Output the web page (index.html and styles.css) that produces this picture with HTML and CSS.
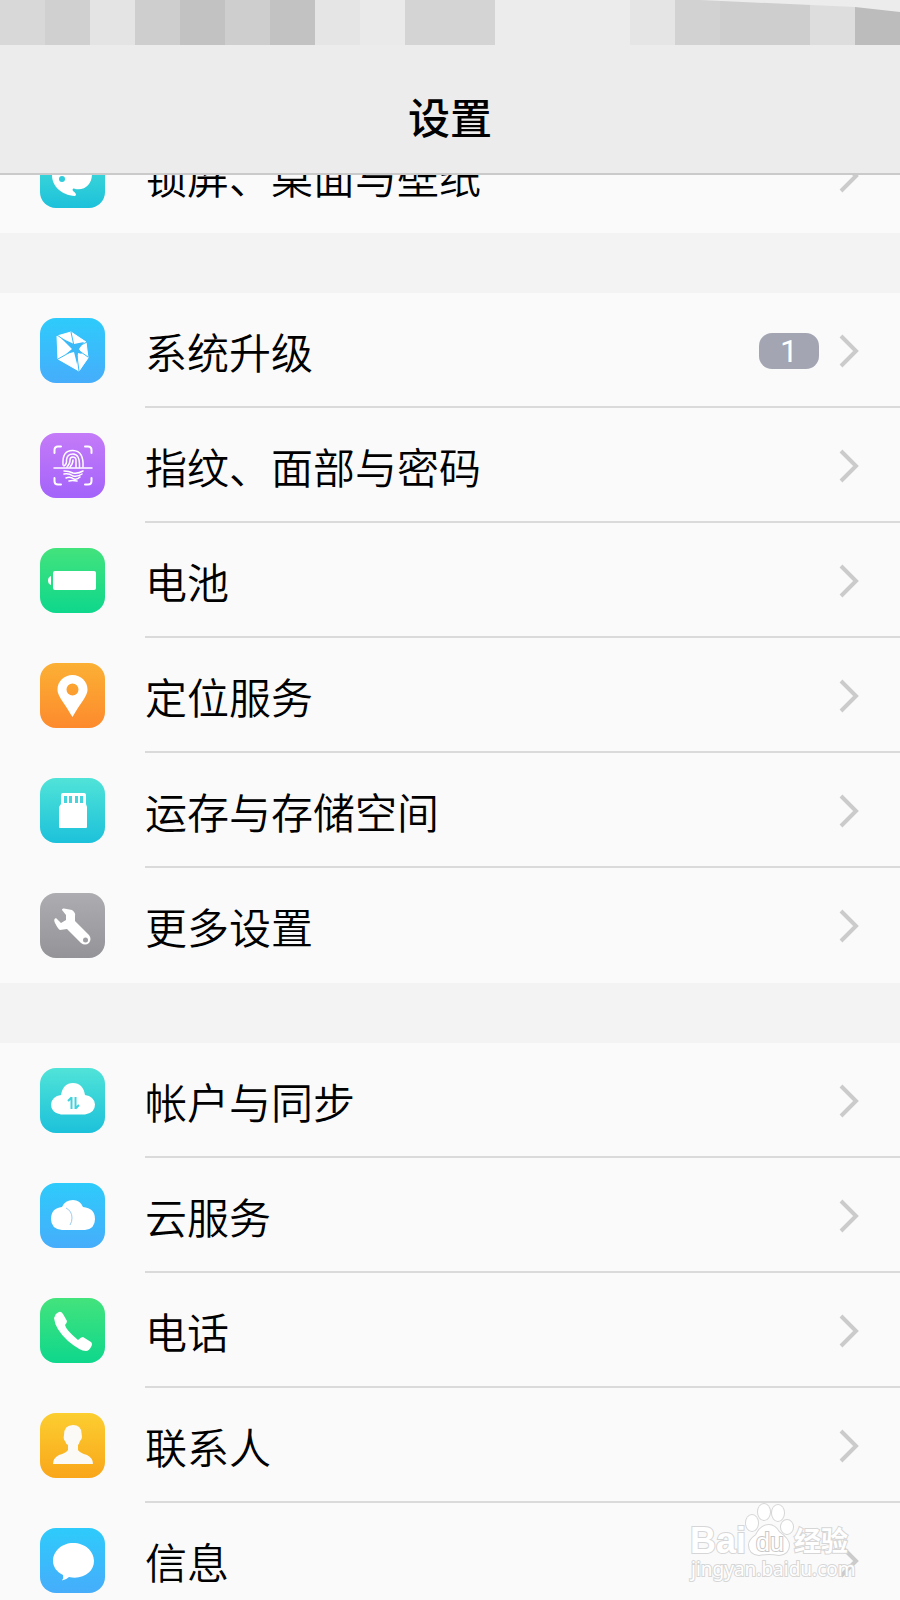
FILE: index.html
```html
<!DOCTYPE html>
<html lang="zh-CN">
<head>
    <meta charset="UTF-8">
    <meta name="viewport" content="width=device-width, initial-scale=1.0">
    <title>设置</title>
    <link rel="stylesheet" href="styles.css">
</head>
<body>
    <div class="screen">
        <header class="header">
            <svg class="status-bar" viewBox="0 0 900 45" preserveAspectRatio="none" shape-rendering="crispEdges" aria-hidden="true">
                <rect x="0" width="45" height="45" fill="#d8d8d8"/>
                <rect x="45" width="45" height="45" fill="#d0d0d0"/>
                <rect x="90" width="45" height="45" fill="#e4e4e4"/>
                <rect x="135" width="45" height="45" fill="#cecece"/>
                <rect x="180" width="45" height="45" fill="#c2c2c2"/>
                <rect x="225" width="45" height="45" fill="#cecece"/>
                <rect x="270" width="45" height="45" fill="#c2c2c2"/>
                <rect x="315" width="45" height="45" fill="#e5e5e5"/>
                <rect x="360" width="45" height="45" fill="#eaeaea"/>
                <rect x="405" width="90" height="45" fill="#d4d4d4"/>
                <rect x="630" width="45" height="45" fill="#e5e5e5"/>
                <rect x="675" width="45" height="45" fill="#d2d2d2"/>
                <rect x="720" width="90" height="45" fill="#cecece"/>
                <rect x="810" width="45" height="45" fill="#dddddd"/>
                <rect x="855" width="45" height="45" fill="#bcbcbc"/>
                <path d="M700 0L855 7L900 12V0Z" fill="#ececec" shape-rendering="auto"/>
            </svg>
            <h1 class="title">设置</h1>
        </header>

        <main class="content">
            <ul class="group">
                <li><a class="row" href="#wallpaper">
                    <svg class="icon teal" viewBox="0 0 65 65" aria-hidden="true">
                        <path d="M32 11C20 11 12 20 12 32C12 43 21 52 35 53C37 52 36 50 33 48C32 46 33 45 35 46C45 48 52 41 52 31C52 20 43 11 32 11Z" fill="#fff"/>
                        <circle cx="22" cy="36" r="3" fill="#2fcddb"/>
                        <circle cx="25" cy="23" r="3" fill="#2fcddb"/>
                    </svg>
                    <span class="label">锁屏、桌面与壁纸</span>
                    <svg class="chevron" viewBox="0 0 20 34" aria-hidden="true"><path d="M2 2L17 17L2 32"/></svg>
                </a></li>
            </ul>

            <ul class="group">
                <li><a class="row" href="#update">
                    <svg class="icon blue" viewBox="0 0 65 65" aria-hidden="true">
                        <path d="M17 18L31 14L46 24L48 40L39 53L18 41Z" fill="#fff" stroke="#fff" stroke-linejoin="round"/>
                        <path d="M31 14L34 28M48 39L38 32M18 41L34 32M47 24L41 27M39 53L37 38M17 17L27 24" stroke="#3bbaf9" fill="none"/>
                        <path d="M21 20L34 26L44 24L39 31L42 36L38 35L37 46L34 34L26 36L32 31Z" fill="#3bbaf9"/>
                    </svg>
                    <span class="label">系统升级</span>
                    <span class="badge">1</span>
                    <svg class="chevron" viewBox="0 0 20 34" aria-hidden="true"><path d="M2 2L17 17L2 32"/></svg>
                </a></li>
                <li><a class="row" href="#security">
                    <svg class="icon purple" viewBox="0 0 65 65" aria-hidden="true">
                        <g fill="none" stroke="#fff" stroke-linecap="round">
                            <path d="M14.500 20V17Q14.500 13.500 18 13.500H21M45 13.500H48Q51.500 13.500 51.500 17V20M51.500 45V48Q51.500 51.500 48 51.500H45M21 51.500H18Q14.500 51.500 14.500 48V45" stroke-width="2"/>
                            <path d="M14 35H52" stroke-width="1.500"/>
                            <path d="M23 32Q22 17 33 17.500Q44 18 43 34M24 33Q27 31 26.500 27Q27 21 33 21Q40 21 39.500 34M27 34Q30 31 30 27Q30 24 33 24Q36.500 24 36 29V34M30 34Q33 31 33 27" stroke-width="1.500"/>
                            <path d="M24 38Q29 38 33 40Q38 41 43 38M24 41Q29 40 33 43Q38 44 42 41M26 45Q30 43 34 46Q37 47 40 44M29 48Q32 47 37 48" stroke-width="1.500"/>
                        </g>
                    </svg>
                    <span class="label">指纹、面部与密码</span>
                    <svg class="chevron" viewBox="0 0 20 34" aria-hidden="true"><path d="M2 2L17 17L2 32"/></svg>
                </a></li>
                <li><a class="row" href="#battery">
                    <svg class="icon green" viewBox="0 0 65 65" aria-hidden="true">
                        <rect x="13" y="23" width="43" height="19" rx="2" fill="#fff"/>
                        <path d="M11 28V37Q8 36 8 32.500Q8 29 11 28Z" fill="#fff"/>
                    </svg>
                    <span class="label">电池</span>
                    <svg class="chevron" viewBox="0 0 20 34" aria-hidden="true"><path d="M2 2L17 17L2 32"/></svg>
                </a></li>
                <li><a class="row" href="#location">
                    <svg class="icon orange" viewBox="0 0 65 65" aria-hidden="true">
                        <path d="M32.500 12C24 12 17.500 18.500 17.500 26.500C17.500 33 23 38 32.500 54C42 38 47.500 33 47.500 26.500C47.500 18.500 41 12 32.500 12ZM32.500 20.500A6 6 0 1 1 32.500 32.500A6 6 0 1 1 32.500 20.500Z" fill="#fff" fill-rule="evenodd"/>
                    </svg>
                    <span class="label">定位服务</span>
                    <svg class="chevron" viewBox="0 0 20 34" aria-hidden="true"><path d="M2 2L17 17L2 32"/></svg>
                </a></li>
                <li><a class="row" href="#storage">
                    <svg class="icon teal" viewBox="0 0 65 65" aria-hidden="true">
                        <path d="M21 26V17Q21 15 23 15H44Q46 15 46 17V26L47 29V49Q47 50 46 50H20Q19 50 19 49V29Z" fill="#fff"/>
                        <path d="M24 18h3v7h-3zM29 18h3v7h-3zM35 18h3v7h-3zM40 18h3v7h-3z" fill="#45d5de"/>
                    </svg>
                    <span class="label">运存与存储空间</span>
                    <svg class="chevron" viewBox="0 0 20 34" aria-hidden="true"><path d="M2 2L17 17L2 32"/></svg>
                </a></li>
                <li><a class="row" href="#more">
                    <svg class="icon gray" viewBox="0 0 65 65" aria-hidden="true">
                        <path d="M22 17Q22 15 24 15.500L32 17Q36 20 35 23V28L49 42Q52 46 49 50Q45 53 41 50L27 36L20 37Q18 36 15 30Q13 26 16 25L21 30L26 27V22Z" fill="#fff"/>
                        <circle cx="45.500" cy="47" r="2.500" fill="#a0a0a4"/>
                    </svg>
                    <span class="label">更多设置</span>
                    <svg class="chevron" viewBox="0 0 20 34" aria-hidden="true"><path d="M2 2L17 17L2 32"/></svg>
                </a></li>
            </ul>

            <ul class="group">
                <li><a class="row" href="#account">
                    <svg class="icon teal" viewBox="0 0 65 65" aria-hidden="true">
                        <path d="M21 46.500Q11 45 11 36.500Q12 28 21 27Q23 15 33 15Q43 15 45 27Q54 28 55 36.500Q55 45 45 46.500Z" fill="#fff"/>
                        <path d="M31.500 41V29M31.500 29.500L28 33M35.500 29V41M35.500 40.500L39 37" fill="none" stroke="#3dd3dc" stroke-width="2"/>
                    </svg>
                    <span class="label">帐户与同步</span>
                    <svg class="chevron" viewBox="0 0 20 34" aria-hidden="true"><path d="M2 2L17 17L2 32"/></svg>
                </a></li>
                <li><a class="row" href="#cloud">
                    <svg class="icon blue" viewBox="0 0 65 65" aria-hidden="true">
                        <path d="M22 47Q11 46 11 36Q11 25 22 24Q25 17 33 17Q40 17 43 24Q55 25 55 36Q55 46 45 47Z" fill="#fff"/>
                        <path d="M26 25Q32 28 32 35Q32 39 30 42" fill="none" stroke="#9bcdf2"/>
                    </svg>
                    <span class="label">云服务</span>
                    <svg class="chevron" viewBox="0 0 20 34" aria-hidden="true"><path d="M2 2L17 17L2 32"/></svg>
                </a></li>
                <li><a class="row" href="#phone">
                    <svg class="icon green" viewBox="0 0 65 65" aria-hidden="true">
                        <path d="M15 18Q15 16 19 14Q21 13 23 16L27 23Q27 25 25 27Q26 32 38 42Q41 39 43 39L51 44Q53 46 51 49Q49 53 46 53Q40 53 28 43Q15 31 14 20Z" fill="#fff"/>
                    </svg>
                    <span class="label">电话</span>
                    <svg class="chevron" viewBox="0 0 20 34" aria-hidden="true"><path d="M2 2L17 17L2 32"/></svg>
                </a></li>
                <li><a class="row" href="#contacts">
                    <svg class="icon yellow" viewBox="0 0 65 65" aria-hidden="true">
                        <path d="M33 12Q41 12 41.500 20L42 24Q42 26 40 28Q39 31 38 32V37Q40 40 47 42Q53 45 53 51H13Q13 45 19 42Q26 40 28 37V32Q26 31 25 28Q23 26 24 22Q24 12 33 12Z" fill="#fbfaf7"/>
                    </svg>
                    <span class="label">联系人</span>
                    <svg class="chevron" viewBox="0 0 20 34" aria-hidden="true"><path d="M2 2L17 17L2 32"/></svg>
                </a></li>
                <li><a class="row" href="#messages">
                    <svg class="icon blue" viewBox="0 0 65 65" aria-hidden="true">
                        <path d="M33 15C22 15 13 23 13 33C13 39 17 44 23 47Q24 50 22 52.500Q26 52 29 49C43 52 54 44 54 33C54 23 45 15 33 15Z" fill="#fff"/>
                    </svg>
                    <span class="label">信息</span>
                    <svg class="chevron" viewBox="0 0 20 34" aria-hidden="true"><path d="M2 2L17 17L2 32"/></svg>
                </a></li>
            </ul>
        </main>

        <svg class="watermark" viewBox="0 0 170 84" role="img" aria-label="Baidu 经验">
            <text class="wm-brand" x="2" y="51">Bai</text>
            <g class="wm-paw">
                <ellipse cx="64" cy="21" rx="6" ry="8"/>
                <ellipse cx="76" cy="10" rx="6" ry="8"/>
                <ellipse cx="90" cy="11" rx="6" ry="8"/>
                <ellipse cx="99" cy="25" rx="6" ry="7"/>
                <path d="M81 23Q87 23 91 30Q101 37 101 43Q101 52 91 53Q81 51 71 53Q61 52 61 43Q61 38 68 33Q73 23 81 23Z"/>
            </g>
            <text class="wm-du" x="68" y="49">du</text>
            <text class="wm-cn" x="106" y="49">经验</text>
            <text class="wm-url" x="3" y="74">jingyan.baidu.com</text>
        </svg>
    </div>
</body>
</html>
```
FILE: styles.css
```css
* {
    box-sizing: border-box;
}
body {
    margin: 0;
    background: #f3f3f3;
    color: #000;
    font-family: "Noto Sans CJK SC", "Noto Sans", sans-serif;
}
.screen {
    position: relative;
    height: 100vh;
    overflow: hidden;
}

/* header stays above the scrolled list */
.header {
    position: absolute;
    top: 0;
    left: 0;
    right: 0;
    z-index: 1;
    background: #ececec;
    border-bottom: 2px solid #cacaca;
}
.status-bar {
    display: block;
    width: 100%;
    height: 45px;
}
.title {
    margin: 0;
    padding: 47px 0 33px;
    font-size: 42px;
    line-height: 48px;
    font-weight: 500;
    text-align: center;
}

.content {
    display: flex;
    flex-direction: column;
    gap: 60px;
    padding-top: 118px;
}
.group {
    margin: 0;
    padding: 0;
    list-style: none;
    background: #fafafa;
}
.row {
    display: flex;
    align-items: center;
    height: 115px;
    padding: 0 41px 0 40px;
    color: inherit;
    text-decoration: none;
}
.group li:not(:last-child) .row {
    background: linear-gradient(#dadada, #dadada) 145px 100% / 100% 2px no-repeat;
}
.label {
    flex: 1;
    margin-left: 40px;
    font-size: 42px;
    font-weight: 350;
    line-height: 60px;
}
.badge {
    width: 60px;
    margin-right: 20px;
    border-radius: 13px;
    background: #a3a5b2;
    color: #fff;
    font-family: Roboto, sans-serif;
    font-size: 32px;
    font-weight: 400;
    line-height: 36px;
    text-align: center;
}
.chevron {
    width: 20px;
    height: 34px;
    fill: none;
    stroke: #cbcbcb;
    stroke-width: 4;
}

.icon {
    width: 65px;
    height: 65px;
    border-radius: 16px;
}
.teal {
    background: linear-gradient(#50e3d8, #1cc1da);
}
.blue {
    background: linear-gradient(#2ecbfb, #46adfb);
}
.purple {
    background: linear-gradient(#c47bf8, #a463fa);
}
.green {
    background: linear-gradient(#43e37c, #0ed78c);
}
.orange {
    background: linear-gradient(#fbb034, #fd8a2d);
}
.gray {
    background: linear-gradient(#adadb1, #939398);
}
.yellow {
    background: linear-gradient(#fcce30, #f9a61a);
}

.watermark {
    position: absolute;
    right: 42px;
    bottom: 14px;
    width: 170px;
    height: 84px;
    overflow: visible;
    fill: #fff;
    stroke: #d6d6d6;
    stroke-width: 2;
    paint-order: stroke;
    font-family: "Liberation Sans", sans-serif;
}
.wm-brand {
    font-size: 36px;
    font-weight: bold;
}
.wm-du {
    font-size: 25px;
    stroke: #c8c8c8;
}
.wm-cn {
    font-family: "Noto Sans CJK SC", sans-serif;
    font-size: 27px;
    font-weight: bold;
}
.wm-url {
    font-family: "Noto Sans", sans-serif;
    font-size: 19px;
}
```
